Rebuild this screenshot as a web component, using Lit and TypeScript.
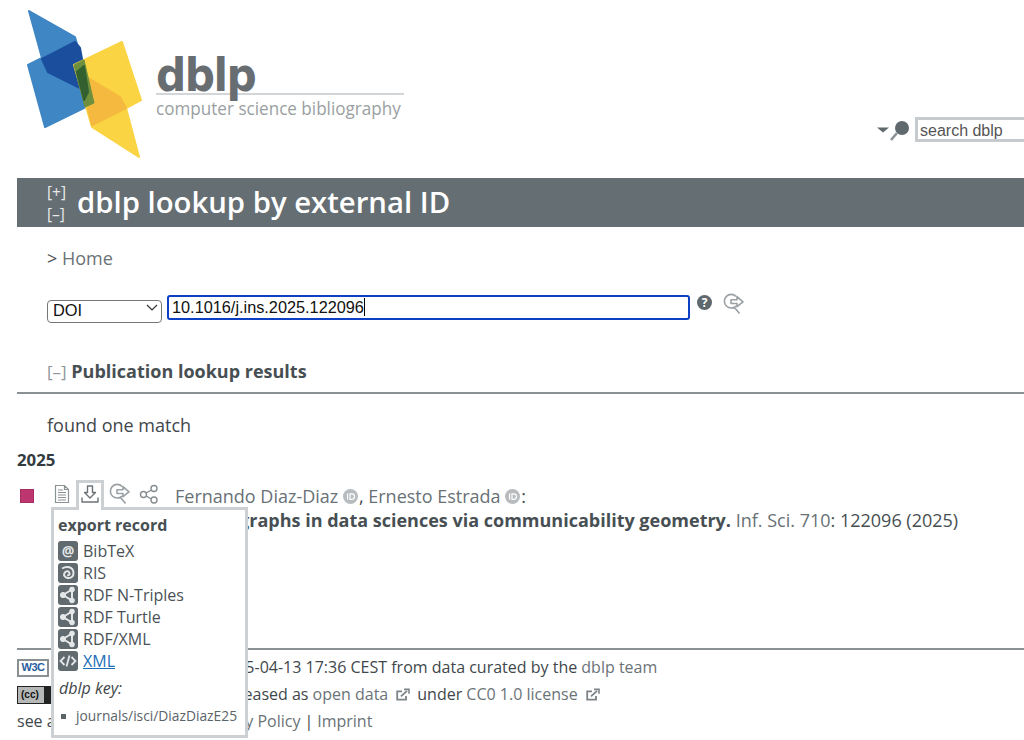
import { LitElement, html, css, svg } from "lit";
import { customElement } from "lit/decorators.js";

const logo = html`<svg class="logo-mark" width="118" height="150" viewBox="27 10 118 150">
  <g stroke-linejoin="round">
    ${svg`<polygon points="29,11 75,37 94,103 45,127 28,65 42,58" fill="#3f86c4" stroke="#3f86c4" stroke-width="2"/>
    <polygon points="42,59 75,42 80,48 88,92 48,72" fill="#1b4f9e" stroke="#1b4f9e" stroke-width="2"/>
    <polygon points="74,65 122,42 141,100 126,108 139,157 92,127" fill="#fbd443" stroke="#fbd443" stroke-width="2"/>
    <polygon points="85,76 120,97 126,108 92,125 87,105" fill="#f4b93e" stroke="#f4b93e" stroke-width="2"/>
    <polygon points="74,65 84,60 94,103 85,107" fill="#6d8f3e" stroke="#6d8f3e" stroke-width="1"/>
    <polygon points="77,72 84,66 88,92 84,100" fill="#33602f" stroke="#33602f" stroke-width="2"/>`}
  </g>
</svg>`;

const docIcon = html`<svg width="18" height="20" viewBox="0 0 18 20" fill="none" stroke="#8b9296" stroke-width="1.2">
  <path d="M2.5 1.5h9l4 4v13h-13zM11.5 1.5v4h4M5 6h5M5 8.5h8M5 11h8M5 13.5h8M5 16h8"/>
</svg>`;

const downloadIcon = html`<svg width="20" height="20" viewBox="0 0 20 20" fill="none" stroke="#6b7377" stroke-width="1.4" stroke-linejoin="round">
  <path d="M7.5 2h5v6.5h3L10 14 4.5 8.5h3zM2 13.5v4.5h16v-4.5"/>
</svg>`;

const lookupIcon = html`<svg width="22" height="22" viewBox="0 0 22 22" fill="none" stroke="#9aa0a4" stroke-width="1.6">
  <path d="M13 13A6.8 6.8 0 1 1 13 3.4M11.5 14.5l5 6M8 6.8h6V3.6l6 5.2-6 4.9v-3.2H8z" stroke-linejoin="round"/>
</svg>`;

const shareIcon = html`<svg width="20" height="20" viewBox="0 0 20 20" fill="none" stroke="#868d91" stroke-width="1.4">
  <circle cx="4.5" cy="10.5" r="3"/><circle cx="15" cy="4.5" r="3"/><circle cx="15" cy="16" r="3"/>
  <path d="M7.2 9l5.2-3M7.2 12l5.2 3"/>
</svg>`;

const orcid = html`<svg class="orcid" width="15" height="15" viewBox="0 0 15 15">
  <circle cx="7.5" cy="7.5" r="7.5" fill="#b8bcbf"/>
  <path d="M4.6 4.4v6.2M7 4.8v5.6h1.7a2.8 2.8 0 0 0 0-5.6z" fill="none" stroke="#fff" stroke-width="1.2"/>
</svg>`;

const extIcon = html`<svg class="ext" width="14" height="13" viewBox="0 0 14 13" fill="none" stroke="#7c8488" stroke-width="1.8">
  <path d="M10 8v3.6H1.2V3.4H6"/><path d="M5 8.4l6-5.6"/><path d="M8 1.4h5v4.4" stroke-width="1.6"/>
</svg>`;

const shareBadge = svg`<g fill="#e4e7e8" stroke="#e4e7e8"><circle cx="5" cy="10" r="2.6"/><circle cx="14" cy="4.5" r="2.4"/><circle cx="14" cy="15.5" r="2.4"/><path d="M5 10l9-5.5v11z" fill="none" stroke-width="2"/></g>`;

const exportItems = [
  { label: "BibTeX", glyph: svg`<text x="10" y="14.5" text-anchor="middle" font-family="'Open Sans',sans-serif" font-weight="700" font-size="14" fill="#e4e7e8">@</text>` },
  { label: "RIS", glyph: svg`<path d="M4 5.5c5-3 11-1.5 11.5 4 .3 4-3 6-6 5.5-3-.5-4-3-3-5s4-2.5 5 0c.6 1.6-1 2.6-2.2 2" fill="none" stroke="#e4e7e8" stroke-width="2"/>` },
  { label: "RDF N-Triples", glyph: shareBadge },
  { label: "RDF Turtle", glyph: shareBadge },
  { label: "RDF/XML", glyph: shareBadge },
  { label: "XML", link: true, glyph: svg`<path d="M6.5 6l-4 4 4 4M13.5 6l4 4-4 4M11.5 4.5l-3 11" fill="none" stroke="#e4e7e8" stroke-width="1.8"/>` },
];

@customElement("app-root")
export class AppRoot extends LitElement {
  static styles = css`
    :host {
      display: block;
      height: 740px;
      overflow: hidden;
      background: #fff;
      font-family: "Open Sans", sans-serif;
      font-size: 18px;
      line-height: 27px;
      color: #3f474b;
    }
    a { color: #6a7378; text-decoration: none; }

    .head { display: flex; height: 178px; position: relative; }
    .logo { display: flex; margin: 10px 0 0 27px; height: 150px; }
    .logo-text { margin: 42px 0 0 11px; width: 248px; }
    .logo-name {
      height: 41px;
      border-bottom: 2px solid #d3d6d8;
      font-family: "DejaVu Sans Condensed", "DejaVu Sans", sans-serif;
      font-weight: 700;
      font-size: 47px;
      line-height: 46px;
      letter-spacing: -1.5px;
      color: #676d70;
    }
    .logo-sub {
      font-family: "Open Sans", sans-serif;
      font-size: 19px;
      line-height: 26px;
      color: #9a9fa2;
      white-space: nowrap;
      transform: scaleX(0.9);
      transform-origin: left top;
    }
    .search {
      margin: 117px 0 0 auto;
      display: flex;
      align-items: flex-start;
      width: 148px;
      flex: none;
    }
    .search svg { margin: 2px 1px 0 0; flex: none; }
    .search-box {
      border: 3px solid #c8cbcd;
      border-right: none;
      height: 25px;
      flex: 1;
      padding-left: 2px;
      font-family: "Liberation Sans", sans-serif;
      font-size: 16px;
      line-height: 21px;
      color: #555;
      box-sizing: border-box;
    }

    .bar {
      margin-left: 17px;
      height: 49px;
      background: #656e73;
      color: #fff;
      display: flex;
      align-items: center;
      padding-left: 30px;
    }
    .toggles { display: flex; flex-direction: column; font-size: 15.5px; line-height: 22px; color: #e8eaeb; margin-right: 11px; margin-top: 1px; }
    h1 { margin: 0; font-size: 29.3px; line-height: 49px; font-weight: 600; }

    .content { padding-left: 47px; }
    .crumb { margin-top: 18px; line-height: 27px; }
    .lookup { display: flex; align-items: flex-start; margin-top: 23px; }
    .select { position: relative; width: 115px; height: 23px; margin: 1px 5px 0 0; flex: none; }
    .select svg { position: absolute; right: 4px; top: 8px; margin: 0; pointer-events: none; }
    select {
      appearance: none;
      width: 100%;
      height: 100%;
      padding: 0 0 2px 5px;
      font-family: "Liberation Sans", sans-serif;
      font-size: 16.4px;
      color: #111;
      background: #fff;
      border: 1px solid #767676;
      border-radius: 4px;
    }
    .input {
      width: 523px;
      height: 25px;
      box-sizing: border-box;
      border: 2px solid #0d3fc4;
      border-radius: 3px;
      padding-left: 3px;
      font-family: "Liberation Sans", sans-serif;
      font-size: 16.3px;
      line-height: 21px;
      color: #111;
    }
    .input span { border-right: 1px solid #000; }
    .help {
      width: 15px;
      height: 15px;
      margin: 0 11px 0 7px;
      border-radius: 50%;
      background: #5f686d;
      color: #fff;
      font-size: 12px;
      font-weight: 700;
      line-height: 15px;
      text-align: center;
      flex: none;
    }
    .lookup > svg { margin-top: -2px; }

    .section {
      margin: 38px 0 0 17px;
      padding: 0 0 7px 30px;
      border-bottom: 2px solid #8c9194;
      font-weight: 700;
      line-height: 27px;
      color: #474f53;
    }
    .section i { font-style: normal; font-weight: 400; font-size: 17px; color: #8f9599; }
    .found { margin: 18px 0 0 47px; line-height: 27px; }
    .year { margin: 7px 0 0 17px; font-weight: 700; font-size: 16.8px; line-height: 27px; color: #343b3f; }

    .record { display: flex; margin: 9px 0 0 20px; height: 166px; }
    .mark { width: 14px; height: 14px; background: #bd3670; border: 1px solid #a72e62; box-sizing: border-box; margin-top: 7px; flex: none; margin-right: 17px; }
    .tools { display: flex; flex: none; width: 124px; margin-top: -2px; }
    .tool { width: 29px; height: 28px; display: flex; align-items: center; justify-content: center; box-sizing: border-box; position: relative; flex: none; }
    .tool.doc { width: 22px; }
    .tool.after { margin-left: 1px; }
    .tool.open {
      width: 28px;
      height: 31px;
      margin-left: 3px;
      padding-top: 1px;
      align-items: flex-start;
      border: 3px solid #ccd0d2;
      border-bottom: none;
      background: #fff;
      z-index: 3;
    }
    .entry { line-height: 24px; margin-top: 2px; }
    .entry .names { color: #687176; }
    .entry .title { font-weight: 700; color: #474f53; }
    .entry .orcid { vertical-align: -1px; margin: 0 1px 0 0; }
    .entry .venue { color: #687176; }
    .entry .pages { color: #474f53; }

    .popup {
      position: absolute;
      top: 24px;
      left: -28px;
      width: 197px;
      height: 231px;
      box-sizing: border-box;
      border: 3px solid #ccd0d2;
      background: #fff;
      padding: 3px 0 0 4px;
      z-index: 2;
      line-height: 22px;
    }
    .popup::before {
      content: "";
      position: absolute;
      top: -3px;
      left: 25px;
      width: 22px;
      height: 3px;
      background: #fff;
    }
    .popup h4 { margin: 0 0 3px; font-size: 16px; line-height: 24px; font-weight: 700; color: #474f53; }
    .popup ul { list-style: none; margin: 0; padding: 0; }
    .popup li { display: flex; align-items: center; height: 22px; gap: 5px; font-size: 16px; color: #4a5256; }
    .popup li svg { flex: none; }
    .popup li a { color: #1b6fb8; text-decoration: underline; }
    .popup em { display: block; margin: 4px 0 0 1px; font-size: 16px; line-height: 24px; color: #3f474b; }
    .key { display: flex; align-items: center; margin: 6px 0 0 3px; font-size: 13.8px; line-height: 20px; color: #5b6468; white-space: nowrap; }
    .key::before { content: ""; width: 5px; height: 5px; background: #5b6468; margin-right: 10px; }

    .footer { margin-left: 17px; border-top: 2px solid #8c9194; padding-top: 4px; font-size: 16px; white-space: nowrap; }
    .line { display: flex; align-items: center; height: 27px; }
    .badge { flex: none; box-sizing: border-box; height: 18px; display: flex; align-items: center; justify-content: center; font-family: "Liberation Sans", sans-serif; font-weight: 700; }
    .w3c { width: 32px; margin-right: 48px; border: 2px solid #8a8f92; background: #fff; color: #2a5d9e; font-size: 11px; letter-spacing: -.5px; }
    .cc { width: 34px; margin-right: 76px; border: 1px solid #222; background: linear-gradient(90deg, #b5b8b6 26px, #222 26px); color: #111; font-size: 10px; justify-content: flex-start; padding-left: 3px; }
    .ext { margin: 0 7px 0 4px; flex: none; }
    .line a { margin: 0 4px; }
    .line a.first { margin-left: 0; }
  `;

  render() {
    return html`
      <div class="head">
        <div class="logo">
          ${logo}
          <div class="logo-text">
            <div class="logo-name">dblp</div>
            <div class="logo-sub">computer science bibliography</div>
          </div>
        </div>
        <div class="search">
          <svg width="38" height="24" viewBox="0 0 38 24">
            <path d="M1 8.5h12l-6 5z" fill="#5f686d"/>
            <circle cx="26" cy="9" r="7" fill="#5f686d"/>
            <path d="M21 14l-6 7" stroke="#8b9296" stroke-width="2.6"/>
          </svg>
          <div class="search-box">search dblp</div>
        </div>
      </div>

      <div class="bar">
        <div class="toggles"><span>[+]</span><span>[–]</span></div>
        <h1>dblp lookup by external ID</h1>
      </div>

      <div class="content">
        <div class="crumb">&gt; <a href="#">Home</a></div>
        <div class="lookup">
          <div class="select">
            <select><option>DOI</option></select>
            <svg width="12" height="7" viewBox="0 0 12 7" fill="none" stroke="#333" stroke-width="1.2"><path d="M1 1l5 5 5-5"/></svg>
          </div>
          <div class="input"><span>10.1016/j.ins.2025.122096</span></div>
          <div class="help">?</div>
          ${lookupIcon}
        </div>
      </div>

      <div class="section"><i>[–]</i> Publication lookup results</div>
      <div class="found">found one match</div>
      <div class="year">2025</div>

      <div class="record">
        <div class="mark"></div>
        <div class="tools">
          <div class="tool doc">${docIcon}</div>
          <div class="tool open">
            ${downloadIcon}
            <div class="popup">
              <h4>export record</h4>
              <ul>
                ${exportItems.map(
                  (it) => html`<li>
                    <svg width="20" height="20" viewBox="0 0 20 20"><rect width="20" height="20" rx="3" fill="#606a6f"/>${it.glyph}</svg>
                    ${it.link ? html`<a href="#">${it.label}</a>` : it.label}
                  </li>`
                )}
              </ul>
              <em>dblp key:</em>
              <div class="key">journals/isci/DiazDiazE25</div>
            </div>
          </div>
          <div class="tool after">${lookupIcon}</div>
          <div class="tool">${shareIcon}</div>
        </div>
        <div class="entry">
          <span class="names">Fernando Diaz-Diaz ${orcid}</span>, <span class="names">Ernesto Estrada ${orcid}</span>:<br />
          <span class="title">Signed graphs in data sciences via communicability geometry.</span>
          <span class="venue">Inf. Sci. 710</span><span class="pages">: 122096 (2025)</span>
        </div>
      </div>

      <div class="footer">
        <div class="line"><span class="badge w3c">W3C</span>last updated on 2025-04-13 17:36 CEST from data curated by the&nbsp;<a class="first" href="#">dblp team</a></div>
        <div class="line"><span class="badge cc">(cc)</span>all metadata released as&nbsp;<a class="first" href="#">open data</a>${extIcon}under&nbsp;<a class="first" href="#">CC0 1.0 license</a>${extIcon}</div>
        <div class="line">see also:&nbsp;<a class="first" href="#">Terms of Use</a>|<a href="#">Privacy Policy</a>|<a href="#">Imprint</a></div>
      </div>
    `;
  }
}

declare global {
  interface HTMLElementTagNameMap { "app-root": AppRoot; }
}
